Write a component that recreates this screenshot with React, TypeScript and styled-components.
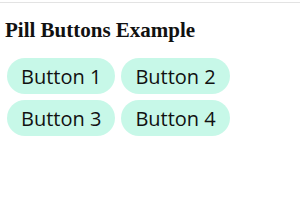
import React from "react";
import styled, { createGlobalStyle } from "styled-components";

const GlobalStyle = createGlobalStyle`
  html, body {
    margin: 0;
    padding: 0;
    background: #ffffff;
  }
`;

const Page = styled.div`
  border-top: 1px solid #e3e3e3;
  margin-top: 2px;
  padding: 0 5px;
`;

const Title = styled.h3`
  font-family: "Liberation Serif", serif;
  font-size: 21px;
  font-weight: 700;
  color: #111;
  margin: 15px 0 15px;
`;

const ButtonGrid = styled.div`
  display: grid;
  grid-template-columns: repeat(2, max-content);
  gap: 6px;
  padding-left: 2px;
`;

const PillButton = styled.button`
  font-family: "Open Sans", "Noto Sans", sans-serif;
  font-size: 20px;
  color: #111;
  background: #c7f8e8;
  border: none;
  border-radius: 18px;
  height: 36px;
  padding: 0 14px;
`;

const App = () => {
  const labels = ["Button 1", "Button 2", "Button 3", "Button 4"];

  return (
    <Page>
      <GlobalStyle />
      <Title>Pill Buttons Example</Title>
      <ButtonGrid>
        {labels.map((label) => (
          <PillButton key={label}>{label}</PillButton>
        ))}
      </ButtonGrid>
    </Page>
  );
};

export default App;
